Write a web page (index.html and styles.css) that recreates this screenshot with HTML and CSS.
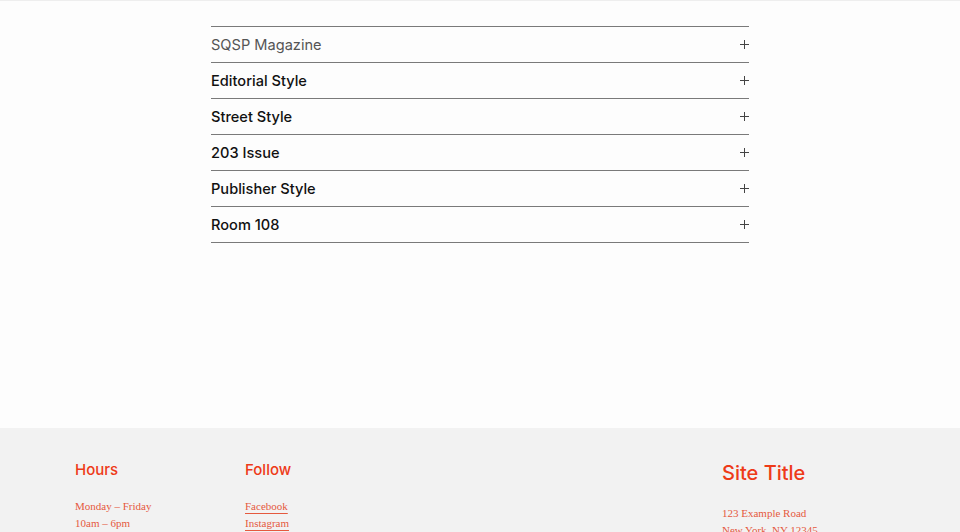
FILE: index.html
```html
<!DOCTYPE html>
<html lang="en">
<head>
    <meta charset="UTF-8">
    <meta name="viewport" content="width=device-width, initial-scale=1.0">
    <title>Accordion</title>
    <link rel="stylesheet" href="styles.css">
</head>
<body>
    <main class="content">
        <div class="accordion">
            <div class="accordion-item active">
                <span class="accordion-title">SQSP Magazine</span>
                <span class="plus"></span>
            </div>
            <div class="accordion-item">
                <span class="accordion-title">Editorial Style</span>
                <span class="plus"></span>
            </div>
            <div class="accordion-item">
                <span class="accordion-title">Street Style</span>
                <span class="plus"></span>
            </div>
            <div class="accordion-item">
                <span class="accordion-title">203 Issue</span>
                <span class="plus"></span>
            </div>
            <div class="accordion-item">
                <span class="accordion-title">Publisher Style</span>
                <span class="plus"></span>
            </div>
            <div class="accordion-item">
                <span class="accordion-title">Room 108</span>
                <span class="plus"></span>
            </div>
        </div>
    </main>

    <footer class="footer">
        <div class="footer-col hours">
            <h4>Hours</h4>
            <p>Monday – Friday</p>
            <p>10am – 6pm</p>
        </div>
        <div class="footer-col follow">
            <h4>Follow</h4>
            <p><a href="#">Facebook</a></p>
            <p><a href="#">Instagram</a></p>
        </div>
        <div class="footer-col site">
            <h3>Site Title</h3>
            <p>123 Example Road</p>
            <p>New York, NY 12345</p>
        </div>
    </footer>
</body>
</html>
```

FILE: styles.css
```css
body {
    margin: 0;
    background-color: #fdfdfd;
    font-family: "Inter", "Open Sans", sans-serif;
}

.content {
    height: 428px;
    border-top: 1px solid #eeeeee;
    box-sizing: border-box;
    padding-top: 25px;
}

.accordion {
    width: 538px;
    margin: 0 auto;
    border-top: 1px solid #7a7a7a;
}

.accordion-item {
    display: flex;
    align-items: center;
    justify-content: space-between;
    height: 35px;
    border-bottom: 1px solid #7a7a7a;
}

.accordion-title {
    font-size: 14.6px;
    font-weight: 500;
    color: #111;
}

.accordion-item.active .accordion-title {
    color: #555;
    font-weight: 400;
}

.plus {
    position: relative;
    width: 9px;
    height: 9px;
}

.plus::before,
.plus::after {
    content: "";
    position: absolute;
    background-color: #444;
}

.plus::before {
    left: 0;
    top: 4px;
    width: 9px;
    height: 1px;
}

.plus::after {
    left: 4px;
    top: 0;
    width: 1px;
    height: 9px;
}

.footer {
    background-color: #f2f2f2;
    height: 104px;
    display: flex;
    padding-left: 75px;
    box-sizing: border-box;
    overflow: hidden;
}

.footer-col h4 {
    margin: 32px 0 19px;
    font-size: 15px;
    font-weight: 500;
    color: #ee3a18;
}

.footer-col h3 {
    margin: 33px 0 20px;
    font-size: 20px;
    font-weight: 500;
    color: #ee3a18;
}

.footer-col p {
    margin: 0;
    font-family: "Liberation Serif", serif;
    font-size: 11px;
    line-height: 17px;
    color: #e5593e;
}

.footer-col a {
    color: #e5593e;
    text-decoration: underline;
    text-underline-offset: 3px;
}

.hours {
    width: 170px;
}

.follow {
    width: 477px;
}
```
